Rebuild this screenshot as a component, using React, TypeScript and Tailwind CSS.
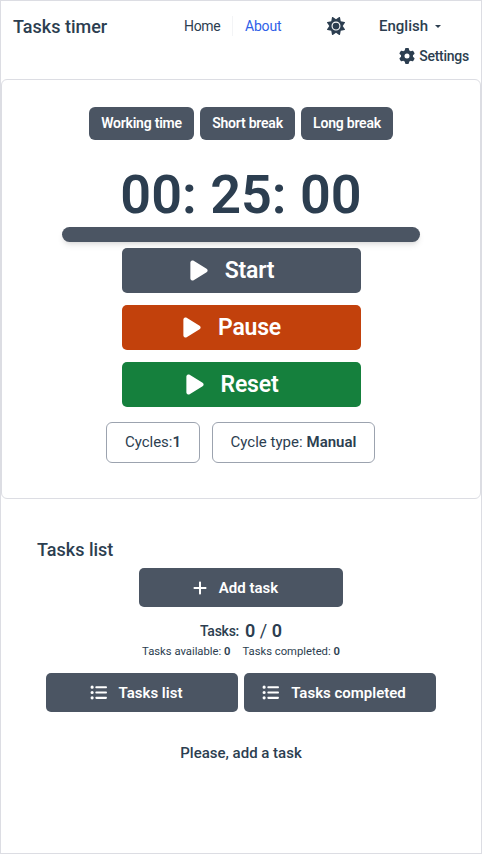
import { FaGear, FaListUl, FaPlay, FaPlus, FaSun } from "react-icons/fa6";

const modes = [
  { label: "Working time", width: "w-[105px]" },
  { label: "Short break", width: "w-[95px]" },
  { label: "Long break", width: "w-[92px]" },
];

const controls = [
  { label: "Start", color: "bg-[#4b5563]" },
  { label: "Pause", color: "bg-[#c2410c]" },
  { label: "Reset", color: "bg-[#15803d]" },
];

function Header() {
  return (
    <header className="h-[78px] pl-3 pr-3">
      <div className="flex h-[50px] items-center">
        <h1 className="w-[158px] text-[18px] font-medium">Tasks timer</h1>
        <nav className="flex items-center text-sm">
          <a className="w-[62px] border-r border-[#f3f4f6] pl-[13px] tracking-[-0.3px]">Home</a>
          <a className="w-[94px] pl-3 tracking-[-0.2px] text-[#2f5fe8]">About</a>
        </nav>
        <FaSun className="h-[18px] w-[18px]" />
        <button className="ml-[34px] flex items-center text-[15px] font-medium">
          English
          <span className="ml-[7px] border-x-[3px] border-t-[3px] border-x-transparent border-t-[#2c3e50]" />
        </button>
      </div>
      <button className="-mt-1 ml-auto flex h-[18px] items-center gap-1 text-sm font-medium tracking-[-0.25px]">
        <FaGear className="h-4 w-4" />
        Settings
      </button>
    </header>
  );
}

function Timer() {
  return (
    <section className="flex h-[420px] flex-col items-center rounded-md border border-[#dcdde3] pt-[27px]">
      <div className="flex gap-[6px]">
        {modes.map((m) => (
          <button key={m.label} className={`${m.width} h-[33px] rounded-md bg-[#4b5563] pb-[2px] text-sm font-semibold tracking-[-0.22px] whitespace-nowrap text-white`}>
            {m.label}
          </button>
        ))}
      </div>
      <div className="mt-[25px] h-[62px] text-[54px] leading-[60px] font-semibold whitespace-nowrap">00: 25: 00</div>
      <div className="h-[15px] w-[358px] rounded-full bg-[#4b5563] shadow-md" />
      <div className="mt-[6px] flex flex-col gap-3">
        {controls.map((c) => (
          <button key={c.label} className={`${c.color} flex h-[45px] w-[239px] items-center justify-center rounded-[5px] pr-[18px] text-[23px] font-semibold tracking-[-0.2px] text-white`}>
            <FaPlay className="mr-[17px] h-[23px] w-[18px]" />
            <span className="pt-[2px]">{c.label}</span>
          </button>
        ))}
      </div>
      <div className="mt-[15px] flex gap-3 pr-px text-[15px]">
        <div className="flex h-[41px] w-[94px] items-center justify-center rounded-md border border-[#9ca3af]">
          Cycles:<b className="font-semibold">1</b>
        </div>
        <div className="flex h-[41px] w-[163px] items-center justify-center gap-1 rounded-md border border-[#9ca3af]">
          Cycle type: <b className="font-semibold">Manual</b>
        </div>
      </div>
    </section>
  );
}

function Tasks() {
  return (
    <section className="flex flex-col items-center pt-[39px]">
      <h2 className="w-full pl-9 text-[18px] leading-6 font-medium">Tasks list</h2>
      <button className="mt-[6px] flex h-[39px] w-[204px] items-center justify-center rounded-[5px] bg-[#4b5563] pr-[11px] text-[15px] font-semibold text-white">
        <FaPlus className="mr-3 h-4 w-[14px]" />
        <span className="pt-px">Add task</span>
      </button>
      <div className="mt-3 flex h-6 items-center gap-[6px]">
        <span className="text-sm font-medium tracking-[-0.25px]">Tasks:</span>
        <span className="-mt-[2px] text-[18px]"><b className="font-semibold">0</b> / <b className="font-semibold">0</b></span>
      </div>
      <div className="mt-[1px] flex h-4 items-center gap-3 pt-px text-[11.25px]">
        <span>Tasks available: <b className="font-semibold">0</b></span>
        <span>Tasks completed: <b className="font-semibold">0</b></span>
      </div>
      <div className="mt-[13px] flex gap-[6px]">
        {["Tasks list", "Tasks completed"].map((label) => (
          <button key={label} className="flex h-[39px] w-[192px] items-center justify-center rounded-[5px] bg-[#4b5563] pr-[12px] text-[15px] font-semibold text-white">
            <FaListUl className="mr-3 h-[17px] w-[17px]" />
            <span className="pt-px">{label}</span>
          </button>
        ))}
      </div>
      <p className="mt-[29px] text-[15px] leading-6 font-medium">Please, add a task</p>
    </section>
  );
}

export default function App() {
  return (
    <main className="h-[854px] border border-[#dcdde3] bg-white font-['Roboto',sans-serif] text-[#2c3e50]">
      <Header />
      <Timer />
      <Tasks />
    </main>
  );
}
